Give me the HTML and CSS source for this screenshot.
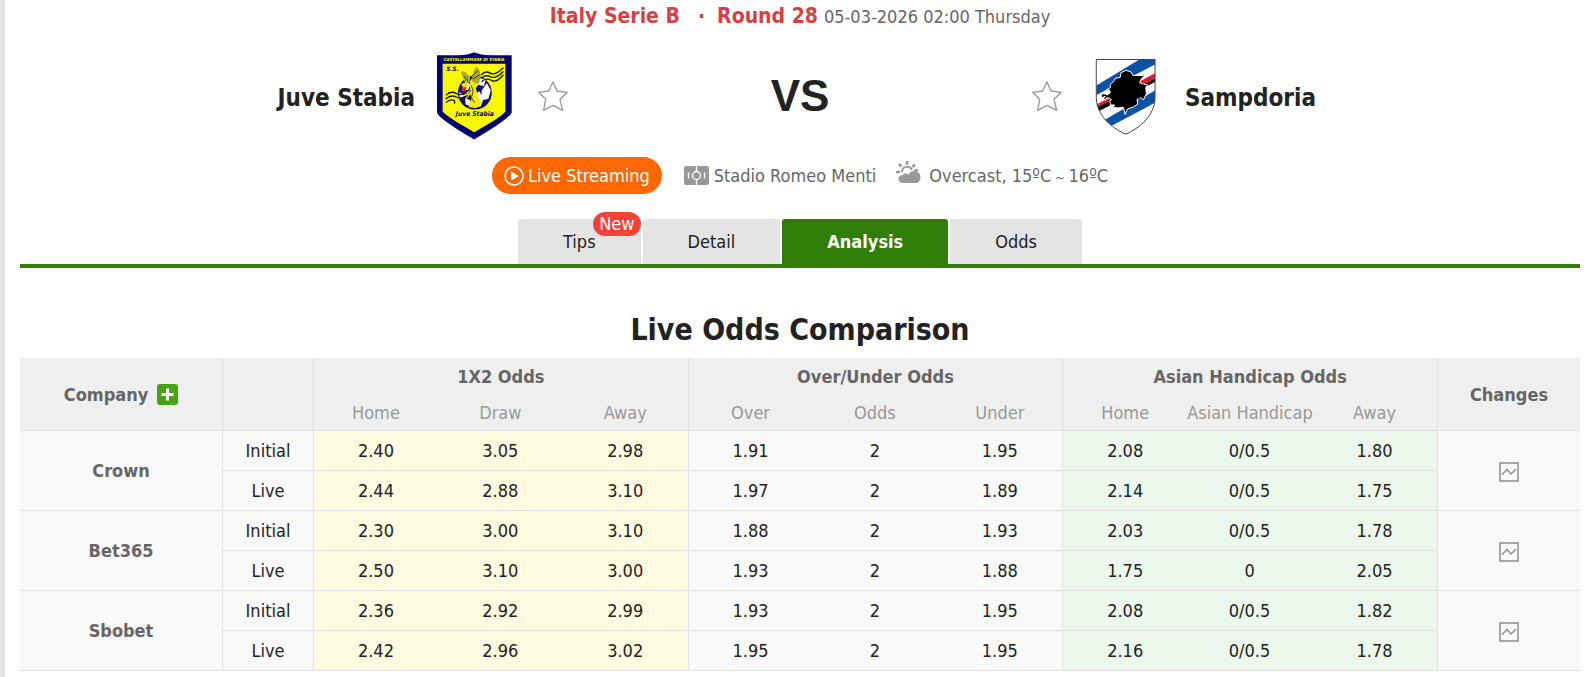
FILE: index.html
```html
<!DOCTYPE html>
<html lang="en">
  <head>
    <meta charset="utf-8">
    <title>Juve Stabia VS Sampdoria</title>
    <link rel="stylesheet" href="styles.css">
  </head>
  <body>
    <svg class="sprite" aria-hidden="true">
      <symbol id="icon-star" viewBox="36 124 90 90">
        <path d="M81 127 L93 154 L124 158 L102 179 L110 212 L81 197 L53 212 L59 179 L38 158 L68 154 Z" fill="#fff" stroke="#999" stroke-width="4" stroke-linejoin="round"/>
      </symbol>
      <symbol id="icon-chart" viewBox="0 0 20 20">
        <rect x="1" y="1" width="18" height="18" fill="none" stroke="#8c8c8c" stroke-width="1.5"/>
        <path d="M3 12.500 L8 7.500 L12 12 L17 7" fill="none" stroke="#8c8c8c" stroke-width="1.500"/>
      </symbol>
    </svg>

    <header class="match">
      <div class="league">
        <a href="#">Italy Serie B</a>
        <b class="dot">·</b>
        <b>Round 28</b>
        <span class="time">05-03-2026 02:00 Thursday</span>
      </div>

      <div class="teams">
        <div class="team home">
          <a href="#" class="name">Juve Stabia</a>
          <svg class="logo" viewBox="49 36 226 264" role="img" aria-label="Juve Stabia">
            <path d="M49 45 L105 45 Q140 46 161 36 Q182 46 217 45 L274 45 L274 219 Q262 240 161 299 Q60 240 49 219 Z" fill="#04046e"/>
            <path d="M66 71 L255 71 L255 215 Q240 234 161 277 Q83 234 66 215 Z" fill="#f8f800"/>
            <text x="161" y="64" class="logo-top">CASTELLAMMARE DI STABIA</text>
            <text x="78" y="93" class="logo-ss">S.S.</text>
            <circle cx="163" cy="158" r="51" fill="#10106a"/>
            <path d="M174 112 L196 119 L190 138 L170 134 Z M199 129 L211 151 L204 176 L186 181 L183 153 Z M165 164 L176 154 L190 174 L181 200 L162 202 Z M134 175 L149 180 L151 200 L135 193 Z M128 131 L139 124 L149 134 L143 150 L126 150 Z M116 157 L130 164 L128 175 L117 174 Z" fill="#fff"/>
            <path d="M148 124 Q155 109 174 110 L176 130 L166 145 L174 172 L184 191 L167 205 L146 202 L143 190 L153 179 L150 162 L139 176 L128 164 L148 151 Z" fill="#f1eb05"/>
            <path d="M155 124 C154 103 160 86 169 80 C184 95 184 122 171 132 Z M125 107 Q116 91 132 95 L149 110 L148 126 L135 132 Z" fill="#aaa92b"/>
            <path d="M122 132 L138 126 L142 144 L131 151 Z" fill="#eee316"/>
            <path d="M123 142 L137 142 L136 153 L125 154 Z" fill="#e62431"/>
            <path d="M155 107 L173 92 M157 117 L178 104 M131 108 L143 124 M152 136 L158 153 L153 173 L162 188 M144 161 L151 151" fill="none" stroke="#454518" stroke-width="3"/>
            <path d="M182 105 Q194 90 209 99 T249 83 M182 115 Q195 102 210 110 T249 94 M183 125 Q198 112 213 121 T249 104 M76 166 Q91 151 106 160 T139 158 M75 177 Q91 163 107 171 T142 166 M76 188 Q91 174 103 183 M102 183 L102 191" fill="none" stroke="#17172d" stroke-width="4"/>
            <text x="163" y="229" class="logo-name">Juve Stabia</text>
          </svg>
          <button type="button" class="star" aria-label="Follow Juve Stabia"><svg><use href="#icon-star"/></svg></button>
        </div>
        <div class="vs">VS</div>
        <div class="team away">
          <button type="button" class="star" aria-label="Follow Sampdoria"><svg><use href="#icon-star"/></svg></button>
          <svg class="logo" viewBox="202 36 226 264" role="img" aria-label="Sampdoria">
            <clipPath id="shield">
              <path d="M227 58 L404 58 L404 174 C403 225 361 263 316 283 C270 263 228 225 227 174 Z"/>
            </clipPath>
            <g clip-path="url(#shield)">
              <path d="M220 50 H410 V290 H220 Z" fill="#fff"/>
              <path d="M220 141 L360 56 L410 52 L410 70 L220 169 Z" fill="#0b51a4"/>
              <path d="M220 198 L410 96 L410 112 L220 206 Z" fill="#e21a2c"/>
              <path d="M220 206 L410 112 L410 123 L220 222 Z" fill="#111"/>
              <path d="M240 247 L410 148 L410 185 L262 264 Z" fill="#0b51a4"/>
            </g>
            <path d="M299 112 L301 98 L316 91 L331 95 L338 106 L367 106 L378 101 L364 115 L357 128 L370 132 L382 135 L376 143 L378 161 L369 180 L362 173 L350 178 L352 193 L337 202 L321 207 L314 224 L309 202 L292 204 L278 202 L282 195 L270 195 L268 184 L273 179 L267 174 L257 174 L254 181 L249 175 L254 169 L243 174 L243 161 L255 162 L260 165 L269 158 L267 150 L258 149 L269 143 L269 133 L281 122 L284 115 Z" fill="#000" stroke="#fff" stroke-width="3"/>
            <path d="M351 176 L359 173 L373 188 L366 193 Z" fill="#0b51a4"/>
            <path d="M227 58 L404 58 L404 174 C403 225 361 263 316 283 C270 263 228 225 227 174 Z" fill="none" stroke="#444" stroke-width="3"/>
          </svg>
          <a href="#" class="name">Sampdoria</a>
        </div>
      </div>

      <div class="info">
        <button type="button" class="live">
          <svg width="20" height="20" viewBox="0 0 20 20"><circle cx="10" cy="10" r="9" fill="none" stroke="#fff" stroke-width="1.500"/><path d="M7 5.500 L15 10 L7 14.500 Z" fill="#fff"/></svg>
          Live Streaming
        </button>
        <a href="#" class="venue">
          <svg width="25" height="19" viewBox="0 0 25 19"><rect width="25" height="19" rx="2" fill="#999"/><path d="M12.500 0 V5 M12.500 14 V19 M4.500 6.500 V12.500 M20.500 6.500 V12.500" stroke="#fff" stroke-width="1.300"/><circle cx="12.500" cy="9.500" r="4" fill="none" stroke="#fff" stroke-width="1.300"/></svg>
          Stadio Romeo Menti
        </a>
        <div class="weather">
          <svg width="25" height="23" viewBox="0 0 25 23"><path d="M11 0 V4 M3 3 L5.500 5.500 M19 3.500 L16.500 6 M0 11 H4 M22 9 L18 10" stroke="#999" stroke-width="2.500"/><path d="M6 11 C6 5 14 4 16 9" fill="none" stroke="#999" stroke-width="2"/><path d="M7 22 C1 22 1 14 7 14 C8 12 11 12 12.500 14 C14 8 24 9 24.500 16 C24.500 20 22 22 19 22 Z" fill="#999"/></svg>
          <span>Overcast, 15ºC<span class="tilde"> ~ </span>16ºC</span>
        </div>
      </div>

      <nav class="tabs">
        <a href="#">Tips<span class="new">New</span></a>
        <a href="#">Detail</a>
        <a href="#" class="on">Analysis</a>
        <a href="#">Odds</a>
      </nav>
    </header>

    <main>
      <h2>Live Odds Comparison</h2>
      <table class="odds">
        <colgroup>
          <col class="col-company">
          <col class="col-type">
          <col span="9">
          <col class="col-changes">
        </colgroup>
        <thead>
          <tr>
            <th rowspan="2"><span class="company">Company
              <button type="button" class="add" aria-label="Add company"><svg width="21" height="21" viewBox="0 0 21 21"><path d="M10.500 4.500 V16.500 M4.500 10.500 H16.500" stroke="#fff" stroke-width="3"/></svg></button></span></th>
            <th rowspan="2" class="line"></th>
            <th colspan="3" class="line">1X2 Odds</th>
            <th colspan="3" class="line">Over/Under Odds</th>
            <th colspan="3" class="line">Asian Handicap Odds</th>
            <th rowspan="2" class="line">Changes</th>
          </tr>
          <tr class="sub">
            <th class="line">Home</th><th>Draw</th><th>Away</th>
            <th class="line">Over</th><th>Odds</th><th>Under</th>
            <th class="line">Home</th><th>Asian Handicap</th><th>Away</th>
          </tr>
        </thead>
        <tbody>
          <tr>
            <th rowspan="2">Crown</th>
            <td class="line">Initial</td>
            <td class="line yellow">2.40</td><td class="yellow">3.05</td><td class="yellow">2.98</td>
            <td class="line">1.91</td><td>2</td><td>1.95</td>
            <td class="line green">2.08</td><td class="green">0/0.5</td><td class="green">1.80</td>
            <td rowspan="2" class="line"><a href="#" class="chart" aria-label="Crown changes"><svg><use href="#icon-chart"/></svg></a></td>
          </tr>
          <tr>
            <td class="line">Live</td>
            <td class="line yellow">2.44</td><td class="yellow">2.88</td><td class="yellow">3.10</td>
            <td class="line">1.97</td><td>2</td><td>1.89</td>
            <td class="line green">2.14</td><td class="green">0/0.5</td><td class="green">1.75</td>
          </tr>
          <tr>
            <th rowspan="2">Bet365</th>
            <td class="line">Initial</td>
            <td class="line yellow">2.30</td><td class="yellow">3.00</td><td class="yellow">3.10</td>
            <td class="line">1.88</td><td>2</td><td>1.93</td>
            <td class="line green">2.03</td><td class="green">0/0.5</td><td class="green">1.78</td>
            <td rowspan="2" class="line"><a href="#" class="chart" aria-label="Bet365 changes"><svg><use href="#icon-chart"/></svg></a></td>
          </tr>
          <tr>
            <td class="line">Live</td>
            <td class="line yellow">2.50</td><td class="yellow">3.10</td><td class="yellow">3.00</td>
            <td class="line">1.93</td><td>2</td><td>1.88</td>
            <td class="line green">1.75</td><td class="green">0</td><td class="green">2.05</td>
          </tr>
          <tr>
            <th rowspan="2">Sbobet</th>
            <td class="line">Initial</td>
            <td class="line yellow">2.36</td><td class="yellow">2.92</td><td class="yellow">2.99</td>
            <td class="line">1.93</td><td>2</td><td>1.95</td>
            <td class="line green">2.08</td><td class="green">0/0.5</td><td class="green">1.82</td>
            <td rowspan="2" class="line"><a href="#" class="chart" aria-label="Sbobet changes"><svg><use href="#icon-chart"/></svg></a></td>
          </tr>
          <tr>
            <td class="line">Live</td>
            <td class="line yellow">2.42</td><td class="yellow">2.96</td><td class="yellow">3.02</td>
            <td class="line">1.95</td><td>2</td><td>1.95</td>
            <td class="line green">2.16</td><td class="green">0/0.5</td><td class="green">1.78</td>
          </tr>
        </tbody>
      </table>
    </main>
  </body>
</html>
```

FILE: styles.css
```css
* {
  box-sizing: border-box;
}
body {
  margin: 0;
  padding: 0 4px 0 15px;
  border-left: 5px solid #e4e4e4;
  min-height: 100vh;
  background-color: #fff;
  color: #222;
  font-family: Tahoma, "DejaVu Sans Condensed", "Noto Sans", sans-serif;
  font-size: 18px;
}
a {
  color: inherit;
  text-decoration: none;
}
button {
  font: inherit;
  border: none;
  padding: 0;
  cursor: pointer;
}
svg {
  display: block;
  flex-shrink: 0;
}
.sprite {
  position: absolute;
  width: 0;
  height: 0;
}

/* match header */
.league {
  display: flex;
  justify-content: center;
  align-items: baseline;
  gap: 6px;
  height: 52px;
  line-height: 32px;
  font-size: 21px;
  font-weight: bold;
  color: #d93f41;
}
.league .dot {
  margin: 0 6px 0 12px;
}
.league .time {
  font-size: 18px;
  font-weight: normal;
  color: #666;
}
.teams {
  display: grid;
  grid-template-columns: 1fr 464px 1fr;
  align-items: center;
}
.team {
  display: flex;
  align-items: center;
}
.home {
  justify-content: flex-end;
}
.name {
  padding-top: 3px;
  font-size: 24px;
  font-weight: bold;
}
.logo {
  width: 75px;
  height: 88px;
  margin: 0 26px 0 22px;
}
.away .logo {
  margin: 0 22px 0 26px;
}
.logo-top,
.logo-ss,
.logo-name {
  font-style: italic;
  font-weight: bold;
}
.logo-top {
  font-size: 13px;
  fill: #f8f800;
  text-anchor: middle;
}
.logo-ss {
  font-size: 18px;
  fill: #04046e;
}
.logo-name {
  font-size: 20px;
  fill: #04046e;
  text-anchor: middle;
}
.star {
  background: none;
}
.star svg {
  width: 30px;
  height: 30px;
}
.vs {
  text-align: center;
  font-family: Arial, "Liberation Sans", sans-serif;
  font-size: 44px;
  font-weight: bold;
  line-height: 48px;
}
.info {
  display: flex;
  justify-content: center;
  align-items: center;
  margin-top: 17px;
  color: #666;
}
.live {
  display: flex;
  align-items: center;
  gap: 4px;
  height: 37px;
  padding: 0 12px;
  border-radius: 19px;
  background-color: #ff6700;
  color: #fff;
}
.venue {
  display: flex;
  align-items: center;
  gap: 5px;
  margin: 0 20px 0 22px;
}
.weather {
  display: flex;
  align-items: center;
  gap: 8px;
}
.weather svg {
  margin-bottom: 6px;
}
.tilde {
  font-size: 13px;
}

/* tabs */
.tabs {
  display: flex;
  justify-content: center;
  gap: 2px;
  margin-top: 25px;
  border-bottom: 4px solid #307d07;
}
.tabs a {
  position: relative;
  padding: 0 45px;
  line-height: 45px;
  border-radius: 3px 3px 0 0;
  background-color: #e4e4e4;
}
.tabs .on {
  background-color: #307d07;
  color: #fff;
  font-weight: bold;
}
.new {
  position: absolute;
  top: -7px;
  right: 0;
  padding: 0 6px;
  border-radius: 12px;
  background-color: #f44336;
  color: #fff;
  line-height: 24px;
}

/* odds table */
h2 {
  margin: 42px 0 8px;
  text-align: center;
  font-size: 30px;
  line-height: 40px;
}
.odds {
  width: 100%;
  table-layout: fixed;
  border-collapse: separate;
  border-spacing: 0;
  text-align: center;
  white-space: nowrap;
}
.col-company {
  width: 202px;
}
.col-type {
  width: 91px;
}
.col-changes {
  width: 143px;
}
.odds th,
.odds td {
  padding: 0;
  border-bottom: 1px solid #e2e2e2;
}
.odds th {
  color: #666;
}
.odds .line {
  border-left: 1px solid #e2e2e2;
}
.odds thead th {
  height: 36px;
  background-color: #efefef;
}
.odds thead th[colspan] {
  border-bottom: none;
}
.odds .sub th {
  height: 37px;
  color: #999;
  font-weight: normal;
}
.odds tbody tr {
  height: 40px;
  background-color: #f9f9f9;
}
.odds .yellow {
  background-color: #fffae0;
}
.odds .green {
  background-color: #edf8ed;
}
.company {
  display: flex;
  justify-content: center;
  align-items: center;
  gap: 9px;
}
.add {
  border-radius: 3px;
  background-color: #47a315;
}
.chart {
  display: inline-block;
  vertical-align: middle;
}
.chart svg {
  width: 20px;
  height: 20px;
}
```
